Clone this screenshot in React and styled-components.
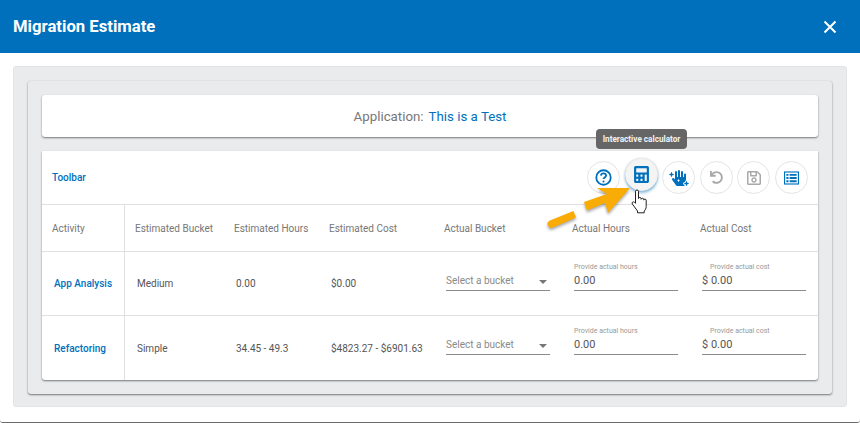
import React from "react";
import styled, { createGlobalStyle } from "styled-components";
import { FaCalculator, FaHandSparkles, FaRegSave, FaUndo } from "react-icons/fa";

const Global = createGlobalStyle`
  html, body { margin: 0; padding: 0; background: #fff; }
  body { font-family: Roboto, "Liberation Sans", sans-serif; overflow: hidden; }
`;

const Dialog = styled.div`
  position: relative;
  width: 860px;
  height: 423px;
  box-sizing: border-box;
  background: #fff;
  border-bottom: 1px solid #6b6b6b;
  border-radius: 0 0 3px 3px;
  display: flex;
  flex-direction: column;
  overflow: hidden;
`;
const Header = styled.header`
  height: 53px;
  flex: none;
  background: #0070bd;
  color: #fff;
  display: flex;
  align-items: center;
  justify-content: space-between;
  padding: 0 22px 0 13px;
`;
const Title = styled.h1`
  margin: 0;
  font-size: 16.7px;
  font-weight: 700;
`;
const Close = styled.svg`
  width: 16px;
  height: 16px;
  stroke: #fff;
  stroke-width: 2;
  fill: none;
`;
const Outer = styled.div`
  margin: 13px 13px 15px;
  height: 341px;
  box-sizing: border-box;
  padding: 14px 14px 13px;
  background: #eaebed;
  border: 1px solid #e2e3e5;
  border-radius: 3px;
`;
const Inner = styled.div`
  height: 313px;
  box-sizing: border-box;
  padding: 14px;
  background: #eaebed;
  border-radius: 3px;
  box-shadow: 0 1px 2px #777, 0 0 1px #ccc;
  display: flex;
  flex-direction: column;
  gap: 14px;
`;
const AppCard = styled.div`
  height: 42px;
  flex: none;
  background: #fff;
  border-radius: 3px;
  box-shadow: 0 1px 2px #777;
  display: flex;
  align-items: center;
  justify-content: center;
  gap: 5px;
  font-size: 13.3px;
  color: #777;
`;
const AppName = styled.span`
  color: #0070bd;
`;
const TableCard = styled.div`
  height: 229px;
  flex: none;
  background: #fff;
  border-radius: 0 0 3px 3px;
  box-shadow: 0 1px 2px #777;
  display: flex;
  flex-direction: column;
`;
const Toolbar = styled.div`
  height: 54px;
  flex: none;
  box-sizing: border-box;
  border-bottom: 1px solid #e0e0e0;
  display: flex;
  align-items: center;
  justify-content: space-between;
  padding: 0 10px;
`;
const ToolbarLabel = styled.span`
  font-size: 10px;
  font-weight: 500;
  color: #0070bd;
`;
const Tools = styled.div`
  display: flex;
  gap: 4.6px;
`;
const Tool = styled.div`
  width: 33px;
  height: 33px;
  box-sizing: border-box;
  border-radius: 50%;
  display: flex;
  align-items: center;
  justify-content: center;
  font-size: ${(p) => p.$size || 16}px;
  color: ${(p) => (p.$muted ? "#a9a9a9" : "#0070bd")};
  background: ${(p) => (p.$active ? "#f4f4f4" : "#fff")};
  border: 1px solid ${(p) => (p.$active ? "#f0f0f0" : "#e4e4e4")};
  ${(p) =>
    p.$active &&
    "transform: translateY(-3px); box-shadow: 0 2px 3px rgba(0,112,189,.45), 0 0 2px rgba(0,0,0,.15);"}
`;
const Row = styled.div`
  display: grid;
  grid-template-columns: 83px 99px 95px 115px 128px 128px 128px;
  height: ${(p) => p.$h}px;
  flex: none;
  box-sizing: border-box;
  border-bottom: ${(p) => (p.$last ? "none" : "1px solid #e0e0e0")};
`;
const Cell = styled.div`
  display: flex;
  align-items: center;
  box-sizing: border-box;
  padding-left: ${(p) => p.$pad ?? 12}px;
  font-size: 10px;
  color: ${(p) => p.$color || "#555"};
  font-weight: ${(p) => p.$weight || 400};
  ${(p) => p.$divider && "border-right: 1px solid #e0e0e0;"}
`;
const FieldCell = styled.div`
  padding: 11px 0 0 12px;
  box-sizing: border-box;
`;
const Field = styled.div`
  width: 104px;
  height: 28px;
  box-sizing: border-box;
  border-bottom: 1px solid #8a8a8a;
  display: flex;
  flex-direction: column;
  justify-content: flex-end;
`;
const FieldLabel = styled.div`
  font-size: 7px;
  line-height: 9px;
  margin-bottom: 1px;
  color: #999;
  padding-left: ${(p) => p.$indent || 0}px;
`;
const FieldValue = styled.div`
  font-size: 11px;
  line-height: 15px;
  margin-bottom: 2px;
  color: #555;
`;
const SelectBox = styled(Field)`
  flex-direction: row;
  justify-content: space-between;
  align-items: flex-end;
  font-size: 10px;
  line-height: 18px;
  color: #8a8a8a;
`;
const Caret = styled.span`
  width: 0;
  height: 0;
  margin: 0 3px 6px 0;
  border-left: 4px solid transparent;
  border-right: 4px solid transparent;
  border-top: 4px solid #777;
`;
const Tooltip = styled.div`
  position: absolute;
  left: 596px;
  top: 129px;
  width: 91px;
  height: 20px;
  border-radius: 4px;
  background: #666;
  color: #f2f2f2;
  font-size: 8.2px;
  font-weight: 700;
  display: flex;
  align-items: center;
  justify-content: center;
`;
const Overlay = styled.svg`
  position: absolute;
  left: ${(p) => p.$x}px;
  top: ${(p) => p.$y}px;
  overflow: visible;
`;

const rows = [
  ["App Analysis", "Medium", "0.00", "$0.00", 64],
  ["Refactoring", "Simple", "34.45 - 49.3", "$4823.27 - $6901.63", 64],
];

const QuestionIcon = () => (
  <svg width="17" height="17" viewBox="0 0 16 16" fill="none" stroke="#0070bd">
    <circle cx="8" cy="8" r="6.8" strokeWidth="1.7" />
    <path d="M5.6 6.2c.1-1.4 1.1-2.1 2.4-2.1 1.4 0 2.4.8 2.4 2 0 1.8-2.4 1.8-2.4 3.4" strokeWidth="1.7" />
    <circle cx="8" cy="11.8" r="1" fill="#0070bd" stroke="none" />
  </svg>
);
const ListIcon = () => (
  <svg width="15" height="14" viewBox="0 0 16 14">
    <rect x=".6" y=".6" width="14.8" height="12.8" fill="#fff" stroke="#0070bd" strokeWidth="1.2" />
    <path fill="#0070bd" d="M2.5 2.6h2.3v2H2.500zM6 2.600h7.500v2H6zM2.500 6h2.300v2H2.500zM6 6h7.500v2H6zM2.500 9.400h2.300v2H2.500zM6 9.400h7.500v2H6z" />
  </svg>
);

export default function App() {
  return (
    <Dialog>
      <Global />
      <Header>
        <Title>Migration Estimate</Title>
        <Close viewBox="0 0 16 16">
          <path d="M2.500 2.500l11 11M13.500 2.500l-11 11" />
        </Close>
      </Header>
      <Outer>
        <Inner>
          <AppCard>
            Application: <AppName>This is a Test</AppName>
          </AppCard>
          <TableCard>
            <Toolbar>
              <ToolbarLabel>Toolbar</ToolbarLabel>
              <Tools>
                <Tool><QuestionIcon /></Tool>
                <Tool $active $size={17}><FaCalculator /></Tool>
                <Tool $size={20}><FaHandSparkles /></Tool>
                <Tool $muted $size={13}><FaUndo /></Tool>
                <Tool $muted><FaRegSave /></Tool>
                <Tool><ListIcon /></Tool>
              </Tools>
            </Toolbar>
            <Row $h={47}>
              <Cell $pad={10} $color="#777" $divider>Activity</Cell>
              {["Estimated Bucket", "Estimated Hours", "Estimated Cost", "Actual Bucket", "Actual Hours", "Actual Cost"].map((h) => (
                <Cell key={h} $pad={10} $color="#777">{h}</Cell>
              ))}
            </Row>
            {rows.map(([name, bucket, hours, cost, h], i) => (
              <Row key={name} $h={h} $last={i === 1}>
                <Cell $color="#0070bd" $weight={500} $divider>{name}</Cell>
                <Cell>{bucket}</Cell>
                <Cell>{hours}</Cell>
                <Cell>{cost}</Cell>
                <FieldCell>
                  <SelectBox>
                    Select a bucket
                    <Caret />
                  </SelectBox>
                </FieldCell>
                <FieldCell>
                  <Field>
                    <FieldLabel>Provide actual hours</FieldLabel>
                    <FieldValue>0.00</FieldValue>
                  </Field>
                </FieldCell>
                <FieldCell>
                  <Field>
                    <FieldLabel $indent={8}>Provide actual cost</FieldLabel>
                    <FieldValue>$ 0.00</FieldValue>
                  </Field>
                </FieldCell>
              </Row>
            ))}
          </TableCard>
        </Inner>
      </Outer>
      <Tooltip>Interactive calculator</Tooltip>
      <Overlay $x={540} $y={180} width="100" height="60" viewBox="0 0 100 60">
        <g fill="#f9ab06" style={{ filter: "drop-shadow(0 2px 1.5px rgba(0,0,0,.35))" }}>
          <path d="M10 40.500L33.500 31l2.500 6.500L13 47.500a3.800 3.800 0 0 1-3-7z" />
          <path d="M44 22l23-8-10-6h33L68 33l-3-10-18 7.500z" />
        </g>
      </Overlay>
      <Overlay $x={631} $y={189} width="20" height="26" viewBox="0 0 20 26">
        <path
          d="M4.500 2.200c0-1.600 3-1.600 3 0v7.300c0-1.400 2.600-1.400 2.600 0v.8c0-1.400 2.600-1.400 2.600 0v.8c0-1.300 2.500-1.300 2.500 0v6.400c0 2-1 3.500-2 4.500v1.800H6.500v-1.800L1.300 15c-1-1.400 1-3 2.300-1.700l.9 1z"
          fill="#fff"
          stroke="#222"
          strokeWidth="1"
        />
      </Overlay>
    </Dialog>
  );
}
